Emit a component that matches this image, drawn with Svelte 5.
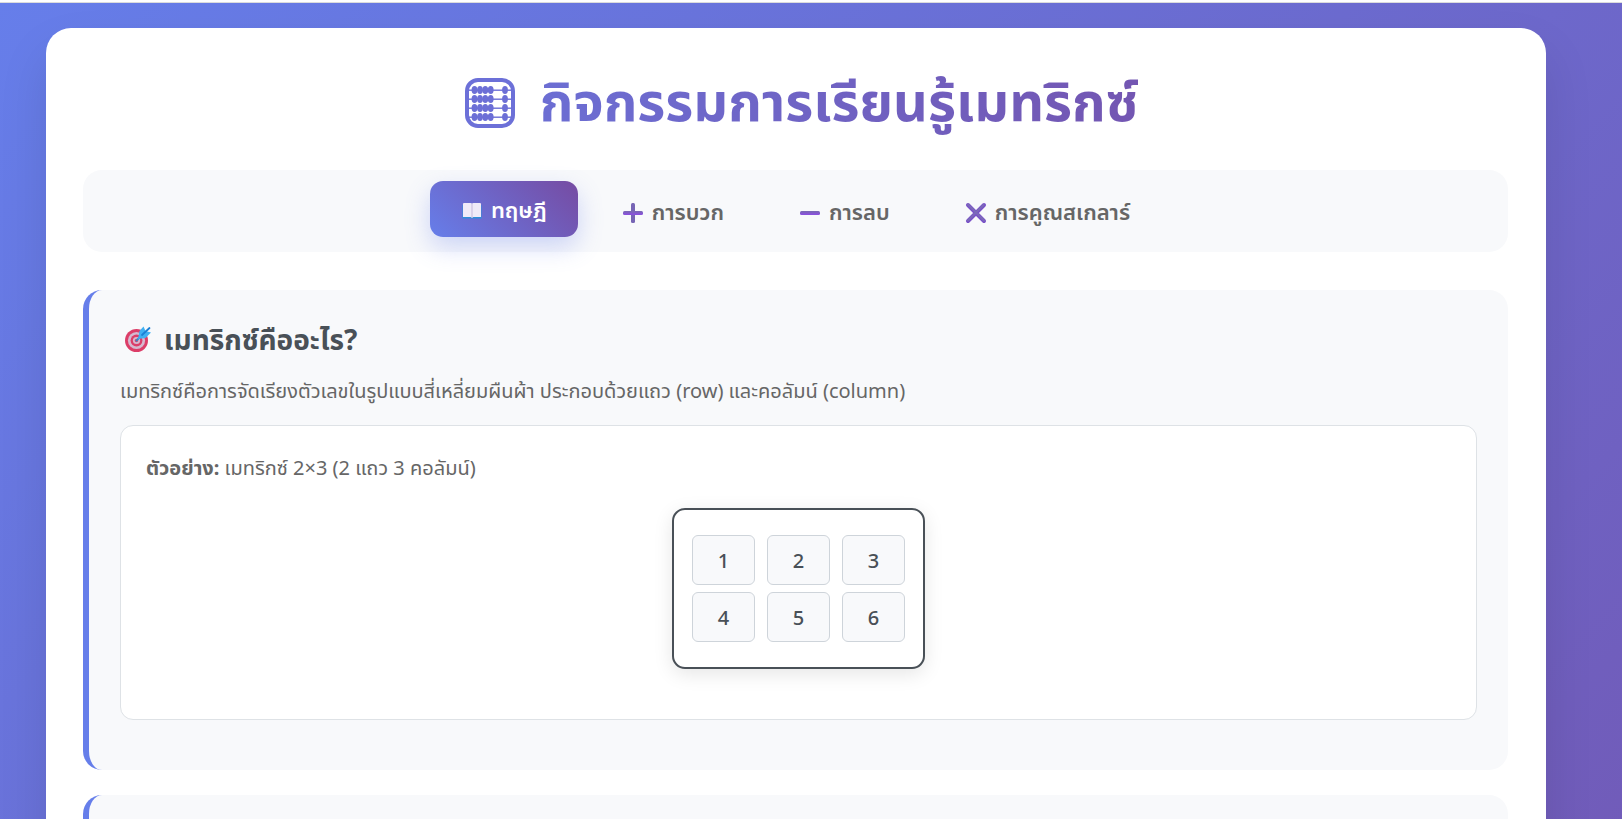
<script lang="ts">
  type TabId = 'theory' | 'add' | 'subtract' | 'scalar';

  let active = $state<TabId>('theory');

  const tabs: { id: TabId; label: string }[] = [
    { id: 'theory', label: 'ทฤษฎี' },
    { id: 'add', label: 'การบวก' },
    { id: 'subtract', label: 'การลบ' },
    { id: 'scalar', label: 'การคูณสเกลาร์' },
  ];

  const matrix = [
    [1, 2, 3],
    [4, 5, 6],
  ];

  const rods = [22, 31, 40, 49];
  const beads = [19.5, 25, 30.300, 35.700, 50];
</script>

<div class="page">
  <main class="container">
    <h1>
      <svg class="abacus" viewBox="10 10 50 50" aria-hidden="true">
        <rect x="12" y="12" width="46" height="46" rx="11" fill="none" stroke="#6c70d8" stroke-width="4" />
        {#each rods as y}
          <rect x="13" y={y - 0.5} width="44" height="1.4" fill="#6c6fd6" />
          {#each beads as x}
            <ellipse cx={x} cy={y} rx="2.900" ry="3.900" fill="#6c6fd6" />
          {/each}
        {/each}
      </svg>
      <span>กิจกรรมการเรียนรู้เมทริกซ์</span>
    </h1>

    <nav class="tabs">
      {#each tabs as tab}
        <button type="button" class="tab" class:active={active === tab.id} onclick={() => (active = tab.id)}>
          {#if tab.id === 'theory'}
            <svg class="icon" viewBox="0 0 22 22" aria-hidden="true">
              <path d="M1.500 5h19v13.500h-19z" fill="#2f8fd8" />
              <path d="M2 4q0-1 1-1h6.500q1.500 0 1.500 1 0-1 1.500-1H19q1 0 1 1v13h-7.500q-1 0-1.500 1-.5-1-1.500-1H2z" fill="#f0ebf8" />
              <path d="M11 4v14" stroke="#c5b9db" stroke-width="1" />
            </svg>
          {:else}
            <svg class="icon" viewBox="0 0 22 22" aria-hidden="true">
              <defs>
                <linearGradient id="sign-{tab.id}" gradientUnits="userSpaceOnUse" x1="0" y1="8" x2="0" y2="14">
                  <stop offset="0.2" stop-color="#7a68b4" />
                  <stop offset="0.8" stop-color="#8b4fe0" />
                </linearGradient>
              </defs>
              {#if tab.id === 'add'}
                <g fill="url(#sign-add)">
                  <rect x="9" y="1" width="4" height="20" rx="1.500" fill="#7765b5" />
                  <rect x="1" y="9" width="20" height="4" rx="1.500" />
                </g>
              {:else if tab.id === 'subtract'}
                <rect x="1" y="9" width="20" height="4" rx="1.500" fill="url(#sign-subtract)" />
              {:else}
                <path d="M3 3l16 16M19 3L3 19" stroke="#7950c8" stroke-width="4" stroke-linecap="round" />
                <path d="M3 2.500l16 16M18.500 3L3 18.500" stroke="#7b6ab8" stroke-width="2" stroke-linecap="round" />
              {/if}
            </svg>
          {/if}
          <span>{tab.label}</span>
        </button>
      {/each}
    </nav>

    <section class="card">
      <h2>
        <svg class="target" viewBox="0 0 28 28" aria-hidden="true">
          <circle cx="12.500" cy="15.500" r="11.500" fill="#dc3d68" />
          <circle cx="12.500" cy="15.500" r="8.600" fill="#d5b9cf" />
          <circle cx="12.500" cy="15.500" r="5.900" fill="#dc3d68" />
          <circle cx="12.500" cy="15.500" r="3.600" fill="#d5b9cf" />
          <circle cx="12.500" cy="15.500" r="1.700" fill="#dc3d68" />
          <path d="M12.500 15.500L20 8" stroke="#2f8ac8" stroke-width="1.800" stroke-linecap="round" />
          <path d="M14 14l1.500-8L19.500 1.500l2 4.500L27 7.500l-5.500 5.500z" fill="#3fb0f2" />
          <path d="M18 10L25.500 3" stroke="#1b7fd4" stroke-width="1.800" stroke-linecap="round" />
        </svg>
        <span>เมทริกซ์คืออะไร?</span>
      </h2>
      <p>เมทริกซ์คือการจัดเรียงตัวเลขในรูปแบบสี่เหลี่ยมผืนผ้า ประกอบด้วยแถว (row) และคอลัมน์ (column)</p>

      <div class="example">
        <p><strong>ตัวอย่าง:</strong> เมทริกซ์ 2×3 (2 แถว 3 คอลัมน์)</p>
        <div class="matrix-wrap">
          <table class="matrix">
            <tbody>
              {#each matrix as row}
                <tr>
                  {#each row as cell}
                    <td>{cell}</td>
                  {/each}
                </tr>
              {/each}
            </tbody>
          </table>
        </div>
      </div>
    </section>

    <section class="card next"></section>
  </main>
</div>

<style>
  :global(body) {
    margin: 0;
  }

  .page {
    box-sizing: border-box;
    height: 100vh;
    overflow: hidden;
    padding: 26px 55px 0 25px;
    border-top: 2px solid #fff;
    background: linear-gradient(135deg, #667eea 0%, #764ba2 100%) 0 0 / 100% 2000px;
    box-shadow: inset 0 1px #dcdcdc;
    color: #666;
    font-family: 'Segoe UI', 'Noto Sans', 'Noto Sans Thai', 'Open Sans', sans-serif;
    font-size: 20px;
  }

  .container {
    box-sizing: border-box;
    max-width: 1500px;
    margin: 0 auto;
    padding: 37px 38px 37px 37px;
    border-radius: 25px;
    background: #fff;
    box-shadow: 0 25px 50px rgba(0, 0, 0, 0.1);
  }

  h1,
  h2,
  p {
    margin: 0;
  }

  h1 {
    display: flex;
    align-items: center;
    justify-content: center;
    gap: 25px;
    height: 76px;
    margin-bottom: 29px;
    padding-left: 12px;
    font-size: 54px;
    font-weight: 700;
    line-height: 70px;
    white-space: nowrap;
  }

  h1 span {
    padding-bottom: 6px;
    background: linear-gradient(90deg, #6c6ed3, #7356b2);
    background-clip: text;
    color: transparent;
  }

  .abacus {
    width: 50px;
    height: 50px;
  }

  .tabs {
    display: flex;
    justify-content: center;
    gap: 13px;
    padding: 13px;
    border-radius: 19px;
    background: #f8f9fb;
  }

  .tab {
    display: flex;
    align-items: center;
    gap: 8px;
    height: 56px;
    padding: 4px 31px 0;
    border: 0;
    border-radius: 13px;
    background: transparent;
    color: #666;
    font: inherit;
    font-size: 22px;
    font-weight: 600;
    white-space: nowrap;
    cursor: pointer;
  }

  .tab.active {
    background: linear-gradient(45deg, #667eea, #764ba2);
    box-shadow: 0 10px 25px rgba(102, 126, 234, 0.3);
    color: #fff;
    transform: translateY(-2px);
  }

  .icon {
    width: 22px;
    height: 22px;
  }

  .card {
    margin-top: 38px;
    padding: 31px;
    border-left: 6px solid #667eea;
    border-radius: 19px;
    background: #f8f9fb;
  }

  .card.next {
    min-height: 400px;
    margin-top: 25px;
  }

  h2 {
    display: flex;
    align-items: center;
    gap: 12px;
    height: 36px;
    margin-bottom: 18px;
    padding-left: 4px;
    color: #495057;
    font-size: 28px;
    font-weight: 700;
    line-height: 36px;
  }

  .target {
    width: 28px;
    height: 28px;
  }

  p {
    line-height: 32px;
  }

  .example {
    margin: 18px 0 19px;
    padding: 26px 25px 50px;
    border: 1px solid #dee2e6;
    border-radius: 13px;
    background: #fff;
  }

  .matrix-wrap {
    display: flex;
    justify-content: center;
    margin-top: 24px;
  }

  .matrix {
    padding: 18px 6px;
    border: 2px solid #495057;
    border-radius: 13px;
    border-collapse: separate;
    border-spacing: 12px 7px;
    background: #fff;
    box-shadow: 0 5px 19px rgba(0, 0, 0, 0.1);
  }

  td {
    box-sizing: border-box;
    width: 63px;
    height: 50px;
    padding: 0;
    border: 1px solid #ced4da;
    border-radius: 6px;
    background: #f8f9fb;
    color: #495057;
    font-size: 20px;
    font-weight: 500;
    text-align: center;
  }
</style>
